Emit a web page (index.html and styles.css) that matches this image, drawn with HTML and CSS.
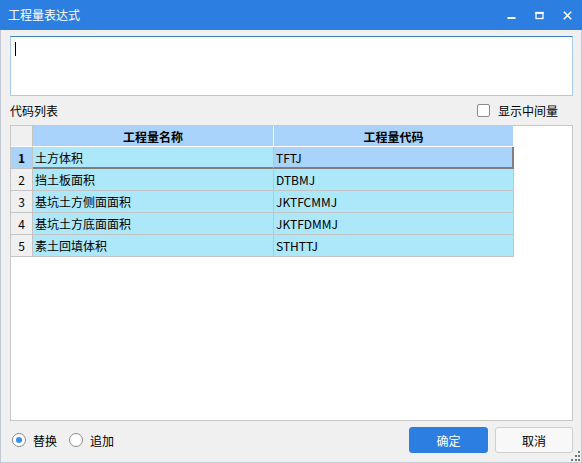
FILE: index.html
```html
<!DOCTYPE html>
<html>
<head>
<meta charset="utf-8">
<link rel="stylesheet" href="styles.css">
</head>
<body>
<div class="window">
  <div class="titlebar">
    <span class="title">工程量表达式</span>
    <div class="controls">
      <svg class="ctl" width="9" height="9" viewBox="0 0 9 9"><rect x="0.5" y="6" width="8" height="2" fill="#fff"/></svg>
      <svg class="ctl" width="9" height="9" viewBox="0 0 9 9"><rect x="1" y="1.5" width="7" height="6" fill="none" stroke="#fff" stroke-width="1.3"/><rect x="0.5" y="1" width="8" height="2" fill="#fff"/></svg>
      <svg class="ctl" width="9" height="9" viewBox="0 0 9 9"><path d="M0.8 0.8 L8.2 8.2 M8.2 0.8 L0.8 8.2" stroke="#fff" stroke-width="1.5"/></svg>
    </div>
  </div>
  <div class="content">
    <div class="editor"><span class="caret"></span></div>
    <div class="listbar">
      <span class="label">代码列表</span>
      <span class="check"><span class="box"></span>显示中间量</span>
    </div>
    <div class="grid">
      <div class="table">
        <div class="cell corner"></div>
        <div class="cell head">工程量名称</div>
        <div class="cell head">工程量代码</div>

        <div class="cell rh rh-cur">1</div>
        <div class="cell data cur-row">土方体积</div>
        <div class="cell data cur-row cur-cell">TFTJ</div>

        <div class="cell rh">2</div>
        <div class="cell data">挡土板面积</div>
        <div class="cell data">DTBMJ</div>

        <div class="cell rh">3</div>
        <div class="cell data">基坑土方侧面面积</div>
        <div class="cell data">JKTFCMMJ</div>

        <div class="cell rh">4</div>
        <div class="cell data">基坑土方底面面积</div>
        <div class="cell data">JKTFDMMJ</div>

        <div class="cell rh">5</div>
        <div class="cell data">素土回填体积</div>
        <div class="cell data">STHTTJ</div>
      </div>
    </div>
    <div class="footer">
      <div class="radios">
        <span class="radio"><span class="circle on"></span>替换</span>
        <span class="radio"><span class="circle"></span>追加</span>
      </div>
      <div class="buttons">
        <span class="btn primary">确定</span>
        <span class="btn">取消</span>
      </div>
    </div>
  </div>
  <svg class="grip" width="10" height="10" viewBox="0 0 10 10">
    <rect x="8" y="0" width="2" height="2" fill="#777"/>
    <rect x="5" y="4" width="2" height="2" fill="#777"/>
    <rect x="8" y="4" width="2" height="2" fill="#777"/>
    <rect x="1" y="8" width="2" height="2" fill="#777"/>
    <rect x="5" y="8" width="2" height="2" fill="#777"/>
    <rect x="8" y="8" width="2" height="2" fill="#777"/>
  </svg>
</div>
</body>
</html>
```

FILE: styles.css
```css
html, body {
  margin: 0;
  padding: 0;
  background: #f0f0f0;
}
body {
  font-family: "Noto Sans CJK SC", "Microsoft YaHei", sans-serif;
  font-size: 12px;
  color: #000;
}
.window {
  width: 582px;
  height: 463px;
  box-sizing: border-box;
  background: #f0f0f0;
  border: 1px solid #c3cad5;
  border-top: none;
  position: relative;
  display: flex;
  flex-direction: column;
}
.titlebar {
  height: 30px;
  margin: 0 -1px;
  background: #2c7fe0;
  color: #fff;
  display: flex;
  align-items: center;
  padding-left: 8px;
}
.title {
  font-size: 12px;
  line-height: 1;
}
.controls {
  margin-left: auto;
  display: flex;
  gap: 19px;
  padding-right: 10px;
  align-items: center;
}
.ctl { display: block; }
.content {
  padding: 6px 8px 0 9px;
  display: flex;
  flex-direction: column;
}
.editor {
  height: 60px;
  box-sizing: border-box;
  background: #fff;
  border: 1px solid #a9cbea;
  border-top-color: #3b7fc6;
}
.caret {
  display: block;
  width: 1px;
  height: 14px;
  background: #000;
  margin: 5px 0 0 4px;
}
.listbar {
  margin-top: 4px;
  height: 20px;
  display: flex;
  align-items: center;
  justify-content: space-between;
}
.check {
  display: flex;
  align-items: center;
  gap: 8px;
  margin-right: 15px;
}
.box {
  width: 13px;
  height: 13px;
  box-sizing: border-box;
  border: 1px solid #8a8a8a;
  border-radius: 2px;
  background: #fff;
}
.grid {
  margin-top: 5px;
  height: 296px;
  box-sizing: border-box;
  border: 1px solid #c8c8c8;
  background: #fff;
}
.table {
  display: grid;
  grid-template-columns: 22px 241px 240px;
  grid-auto-rows: 22px;
  grid-template-rows: 21px;
}
.cell {
  box-sizing: border-box;
  border-right: 1px solid #c4c4c4;
  border-bottom: 1px solid #c4c4c4;
  display: flex;
  align-items: center;
  white-space: nowrap;
  overflow: hidden;
}
.corner {
  background: #f0f0f0;
  border-bottom-color: #fff;
}
.head {
  background: #a9d3fa;
  justify-content: center;
  font-weight: bold;
  border-right-color: #fff;
  border-bottom-color: #fff;
}
.rh {
  background: #f0f0f0;
  justify-content: center;
}
.rh-cur {
  background: #a9d3fa;
  font-weight: bold;
}
.data {
  background: #ade7fa;
  padding-left: 2px;
}
.cur-row {
  border-bottom: 2px solid #7f7f7f;
}
.cur-cell {
  background: #a9d3fa;
  border-right: 2px solid #7f7f7f;
}
.footer {
  margin-top: 6px;
  height: 26px;
  display: flex;
  align-items: center;
  justify-content: space-between;
}
.radios {
  display: flex;
  align-items: center;
  gap: 12px;
  padding-left: 2px;
}
.radio {
  display: flex;
  align-items: center;
  gap: 7px;
}
.circle {
  width: 14px;
  height: 14px;
  box-sizing: border-box;
  border: 1px solid #8a8a8a;
  border-radius: 50%;
  background: #fff;
  display: flex;
  align-items: center;
  justify-content: center;
}
.circle.on::after {
  content: "";
  width: 6px;
  height: 6px;
  border-radius: 50%;
  background: #3a8ee6;
}
.buttons {
  display: flex;
  gap: 7px;
}
.btn {
  width: 78px;
  height: 26px;
  box-sizing: border-box;
  border: 1px solid #cfcfcf;
  border-radius: 3px;
  background: #f8f8f8;
  display: flex;
  align-items: center;
  justify-content: center;
}
.btn.primary {
  width: 79px;
  background: #2c7fe0;
  border-color: #2c7fe0;
  color: #fff;
}
.grip {
  position: absolute;
  right: 1px;
  bottom: 1px;
}
```
